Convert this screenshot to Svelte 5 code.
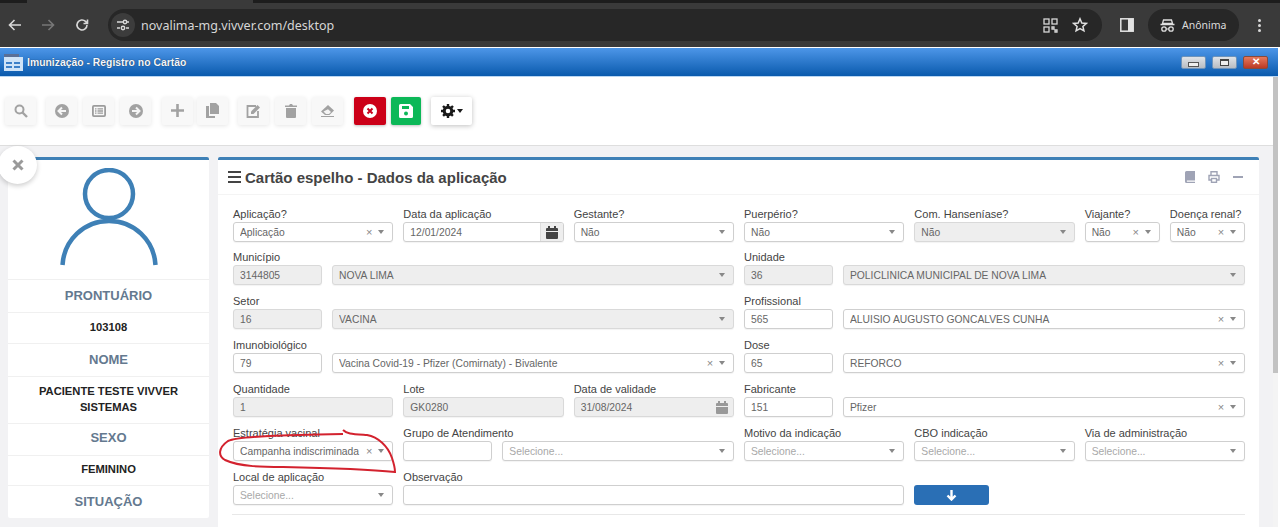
<script>
	const rowOne = [
		{ label: 'Aplicação?', value: 'Aplicação', clear: true, span: 2 },
		{ label: 'Data da aplicação', value: '12/01/2024', date: true, span: 2 },
		{ label: 'Gestante?', value: 'Não', span: 2 },
		{ label: 'Puerpério?', value: 'Não', span: 2 },
		{ label: 'Com. Hanseníase?', value: 'Não', off: true, span: 2 },
		{ label: 'Viajante?', value: 'Não', clear: true, span: 1 },
		{ label: 'Doença renal?', value: 'Não', clear: true, span: 1 }
	];
	const pairs = [
		{ label: 'Município', code: '3144805', value: 'NOVA LIMA', off: true },
		{ label: 'Unidade', code: '36', value: 'POLICLINICA MUNICIPAL DE NOVA LIMA', off: true },
		{ label: 'Setor', code: '16', value: 'VACINA', off: true },
		{ label: 'Profissional', code: '565', value: 'ALUISIO AUGUSTO GONCALVES CUNHA', clear: true },
		{ label: 'Imunobiológico', code: '79', value: 'Vacina Covid-19 - Pfizer (Comirnaty) - Bivalente', clear: true },
		{ label: 'Dose', code: '65', value: 'REFORCO', clear: true }
	];
	const patient = [
		{ head: 'PRONTUÁRIO', text: '103108' },
		{ head: 'NOME', text: 'PACIENTE TESTE VIVVER SISTEMAS' },
		{ head: 'SEXO', text: 'FEMININO', tight: true },
		{ head: 'SITUAÇÃO', text: '' }
	];
</script>

{#snippet select(value, clear, off, placeholder)}
	<div class="ctl" class:off>
		<span class="txt" class:ph={placeholder}>{value}</span>
		{#if clear}<span class="clr">×</span>{/if}
		<span class="caret"></span>
	</div>
{/snippet}

{#snippet date(value, off)}
	<div class="ctl" class:off>
		<span class="txt">{value}</span>
		<span class="addon">
			<svg width="12" height="13" viewBox="0 0 12 13"><path d="M0 3a1 1 0 0 1 1-1h1V0h2v2h4V0h2v2h1a1 1 0 0 1 1 1v2H0zM0 6h12v6a1 1 0 0 1-1 1H1a1 1 0 0 1-1-1z" fill="currentColor"/></svg>
		</span>
	</div>
{/snippet}

{#snippet pair(p)}
	<div class="field s6">
		<span class="lbl">{p.label}</span>
		<div class="duo">
			<div class="code"><div class="ctl" class:off={p.off}><span class="txt">{p.code}</span></div></div>
			<div class="grow">{@render select(p.value, p.clear, p.off, false)}</div>
		</div>
	</div>
{/snippet}

<div class="root">
	<div class="tabstrip"><span class="tab"></span></div>
	<header class="chrome">
		<svg class="nav" width="16" height="16" viewBox="0 0 16 16"><path d="M14 8H3M7.500 3 2.500 8l5 5" fill="none" stroke="#d8d8d8" stroke-width="1.600"/></svg>
		<svg class="nav fwd" width="16" height="16" viewBox="0 0 16 16"><path d="M2 8h11M8.500 3l5 5-5 5" fill="none" stroke="#777" stroke-width="1.600"/></svg>
		<svg class="nav rel" width="16" height="16" viewBox="0 0 16 16"><path d="M13 8a5 5 0 1 1-1.500-3.600L13.500 6.500M13.500 2.500v4h-4" fill="none" stroke="#d8d8d8" stroke-width="1.600"/></svg>
		<div class="omni">
			<span class="tune">
				<svg width="14" height="14" viewBox="0 0 14 14"><g fill="none" stroke="#d8d8d8" stroke-width="1.400"><path d="M1 4h6M1 10h3M10 10h3M11 4h2"/><circle cx="9" cy="4" r="1.700"/><circle cx="7" cy="10" r="1.700"/></g></svg>
			</span>
			<span class="url">novalima-mg.vivver.com/desktop</span>
			<svg class="qr" width="15" height="15" viewBox="0 0 15 15"><g fill="none" stroke="#d8d8d8" stroke-width="1.300"><rect x="1" y="1" width="5" height="5"/><rect x="9" y="1" width="5" height="5"/><rect x="1" y="9" width="5" height="5"/><path d="M9 9h2v2H9zM12 12h2v2h-2z"/></g></svg>
			<svg class="star" width="16" height="16" viewBox="0 0 16 16"><path d="M8 1.800 9.800 6l4.500.4-3.400 3 1 4.400L8 11.500l-3.900 2.300 1-4.400-3.400-3L6.200 6z" fill="none" stroke="#e0e0e0" stroke-width="1.500"/></svg>
		</div>
		<svg class="panel" width="14" height="14" viewBox="0 0 14 14"><rect x=".8" y=".8" width="12.400" height="12.400" fill="none" stroke="#e4e4e4" stroke-width="1.500"/><rect x="8" y="1" width="5" height="12" fill="#e4e4e4"/></svg>
		<div class="incog">
			<svg width="15" height="13" viewBox="0 0 15 13"><path d="M3.500 1h8l1 3.500h-10zM0.500 5.500h14" fill="none" stroke="#e0e0e0" stroke-width="1.300"/><circle cx="4" cy="10" r="2.200" fill="none" stroke="#e0e0e0" stroke-width="1.300"/><circle cx="11" cy="10" r="2.200" fill="none" stroke="#e0e0e0" stroke-width="1.300"/><path d="M6 10h3" stroke="#e0e0e0"/></svg>
			<span>Anônima</span>
		</div>
		<span class="dots"><i></i><i></i><i></i></span>
	</header>

	<div class="titlebar">
		<svg class="winicon" width="19" height="17" viewBox="0 0 19 17"><rect y="0" width="15" height="3" fill="#5a6f96"/><rect y="3" width="19" height="14" fill="#cfe3f7"/><rect x="2" y="8" width="6" height="2" fill="#3d80c8"/><rect x="10" y="8" width="6" height="2" fill="#3d80c8"/><rect x="2" y="12" width="6" height="2" fill="#3d80c8"/><rect x="10" y="12" width="6" height="2" fill="#3d80c8"/></svg>
		<span class="wintitle">Imunização - Registro no Cartão</span>
		<div class="winbtns">
			<span class="wb"><i class="wmin"></i></span>
			<span class="wb"><i class="wmax"></i></span>
			<span class="wb close">✕</span>
		</div>
	</div>

	<div class="page">
		<div class="scroller">
			<div class="toolbar">
				<button class="tb">
					<svg width="14" height="14" viewBox="0 0 14 14"><circle cx="5.500" cy="5.500" r="4" fill="none" stroke="#a2a2a2" stroke-width="2"/><path d="m8.500 8.500 4.500 4.500" stroke="#a2a2a2" stroke-width="2.400"/></svg>
				</button>
				<div class="grp g2">
					<button class="tb">
						<svg width="14" height="14" viewBox="0 0 14 14"><circle cx="7" cy="7" r="7" fill="#a2a2a2"/><path d="M11 7H4M7 3.500 3.500 7 7 10.500" fill="none" stroke="#f5f5f5" stroke-width="2"/></svg>
					</button>
					<button class="tb">
						<svg width="14" height="12" viewBox="0 0 14 12"><rect x=".9" y=".9" width="12.200" height="10.200" rx="1" fill="none" stroke="#9c9c9c" stroke-width="1.800"/><path d="M3 3.800h1.500M5.500 3.800H11M3 6h1.500M5.500 6H11M3 8.200h1.500M5.500 8.200H11" stroke="#9c9c9c" stroke-width="1.300"/></svg>
					</button>
					<button class="tb">
						<svg width="14" height="14" viewBox="0 0 14 14"><circle cx="7" cy="7" r="7" fill="#a2a2a2"/><path d="M3 7h7M7 3.500 10.500 7 7 10.500" fill="none" stroke="#f5f5f5" stroke-width="2"/></svg>
					</button>
				</div>
				<div class="grp g3">
					<button class="tb">
						<svg width="13" height="13" viewBox="0 0 13 13"><path d="M6.500 0v13M0 6.500h13" stroke="#a2a2a2" stroke-width="2.600"/></svg>
					</button>
					<button class="tb">
						<svg width="13" height="15" viewBox="0 0 13 15"><path d="M4 0h6l3 3v8H4z" fill="#a2a2a2"/><path d="M0 3h3v10h6v2H0z" fill="#a2a2a2"/></svg>
					</button>
				</div>
				<div class="grp g4">
					<button class="tb">
						<svg width="15" height="14" viewBox="0 0 15 14"><path d="M10 2H1.500v11h10.500V7" fill="none" stroke="#a2a2a2" stroke-width="1.800"/><path d="M5 7.500 11.500 1 14 3.500 7.500 10H5z" fill="#a2a2a2"/></svg>
					</button>
					<button class="tb">
						<svg width="12" height="14" viewBox="0 0 12 14"><path d="M0 1.500h4L5 0h2l1 1.500h4V3H0zM1 4h10v9a1 1 0 0 1-1 1H2a1 1 0 0 1-1-1z" fill="#a2a2a2"/></svg>
					</button>
					<button class="tb">
						<svg width="15" height="12" viewBox="0 0 15 12"><path d="M8 0 14 5.500 9.500 10H5L1 6.500z" fill="#a2a2a2"/><path d="M3.500 6.500 6 9h3l2-2-3-2.800z" fill="#f5f5f5"/><path d="M1 11.500h13" stroke="#a2a2a2"/></svg>
					</button>
				</div>
				<button class="tb solid red g5">
					<svg width="14" height="14" viewBox="0 0 14 14"><circle cx="7" cy="7" r="7" fill="#fff"/><path d="m4.500 4.500 5 5m0-5-5 5" stroke="#c9001c" stroke-width="2"/></svg>
				</button>
				<button class="tb solid green g6">
					<svg width="14" height="14" viewBox="0 0 14 14"><path d="M1.500 0H11l3 3v9.500a1.500 1.500 0 0 1-1.500 1.500h-11A1.500 1.500 0 0 1 0 12.500v-11A1.500 1.500 0 0 1 1.500 0z" fill="#fff"/><rect x="3" y="2" width="7" height="3" fill="#0cb858"/><circle cx="7" cy="9.500" r="2" fill="#0cb858"/></svg>
				</button>
				<button class="tb gear g7">
					<svg width="14" height="14" viewBox="0 0 14 14"><circle cx="7" cy="7" r="3.800" fill="none" stroke="#1a1a1a" stroke-width="3"/><path d="M7 0v14M0 7h14M2 2l10 10M12 2 2 12" stroke="#1a1a1a" stroke-width="2.400" stroke-dasharray="2.400 9.200"/></svg>
					<span class="gcaret"></span>
				</button>
			</div>

			<div class="content">
				<aside class="side">
					<div class="avatar">
						<svg width="104" height="104" viewBox="0 0 104 104"><g fill="none" stroke="#3e80b6" stroke-width="4.500"><circle cx="52" cy="26" r="24"/><path d="M5.500 97C7 72 27 53 52 53s45 19 46.500 44"/></g></svg>
					</div>
					{#each patient as p}
						<div class="lab" class:tight={p.tight}>{p.head}</div>
						{#if p.text}<div class="val" class:tight={p.tight}>{p.text}</div>{/if}
					{/each}
				</aside>

				<main class="card">
					<div class="card-head">
						<span class="burger"><i></i><i></i><i></i></span>
						<h2>Cartão espelho - Dados da aplicação</h2>
						<div class="tools">
							<svg width="10" height="12" viewBox="0 0 10 12"><path d="M1.500 0H10v9.500H2a1 1 0 0 0 0 1.200h8V12H1.500A1.500 1.500 0 0 1 0 10.500v-9A1.500 1.500 0 0 1 1.500 0z" fill="#9fa3b5"/></svg>
							<svg width="12" height="12" viewBox="0 0 12 12"><path d="M3 4V.8h6V4M3 9H1V4.500h10V9H9" fill="none" stroke="#9fa3b5" stroke-width="1.400"/><rect x="3.500" y="7.500" width="5" height="3.800" fill="none" stroke="#9fa3b5" stroke-width="1.400"/></svg>
							<svg width="10" height="12" viewBox="0 0 10 12"><path d="M0 6h10" stroke="#9fa3b5" stroke-width="2"/></svg>
						</div>
					</div>

					<div class="form">
						{#each rowOne as f}
							<div class="field first" class:s2={f.span === 2}>
								<span class="lbl">{f.label}</span>
								{#if f.date}
									{@render date(f.value, false)}
								{:else}
									{@render select(f.value, f.clear, f.off, false)}
								{/if}
							</div>
						{/each}

						{@render pair(pairs[0])}
						{@render pair(pairs[1])}
						{@render pair(pairs[2])}
						{@render pair(pairs[3])}
						{@render pair(pairs[4])}
						{@render pair(pairs[5])}

						<div class="field s2">
							<span class="lbl">Quantidade</span>
							<div class="ctl off"><span class="txt">1</span></div>
						</div>
						<div class="field s2">
							<span class="lbl">Lote</span>
							<div class="ctl off"><span class="txt">GK0280</span></div>
						</div>
						<div class="field s2">
							<span class="lbl">Data de validade</span>
							{@render date('31/08/2024', true)}
						</div>
						{@render pair({ label: 'Fabricante', code: '151', value: 'Pfizer', clear: true })}

						<div class="field s2">
							<span class="lbl">Estratégia vacinal</span>
							{@render select('Campanha indiscriminada', true, false, false)}
						</div>
						<div class="field s4">
							<span class="lbl">Grupo de Atendimento</span>
							<div class="duo">
								<div class="code"><div class="ctl"><span class="txt"></span></div></div>
								<div class="grow">{@render select('Selecione...', false, false, true)}</div>
							</div>
						</div>
						<div class="field s2">
							<span class="lbl">Motivo da indicação</span>
							{@render select('Selecione...', false, false, true)}
						</div>
						<div class="field s2">
							<span class="lbl">CBO indicação</span>
							{@render select('Selecione...', false, false, true)}
						</div>
						<div class="field s2">
							<span class="lbl">Via de administração</span>
							{@render select('Selecione...', false, false, true)}
						</div>

						<div class="field s2">
							<span class="lbl">Local de aplicação</span>
							{@render select('Selecione...', false, false, true)}
						</div>
						<div class="field s6">
							<span class="lbl">Observação</span>
							<div class="ctl"><span class="txt"></span></div>
						</div>
						<div class="field s1 btn-wrap">
							<button class="go" aria-label="Adicionar">
								<svg width="11" height="11" viewBox="0 0 11 11"><path d="M5.500 0v9M1.500 5.500l4 4 4-4" fill="none" stroke="#fff" stroke-width="2.400"/></svg>
							</button>
						</div>
					</div>
					<div class="sep"></div>
				</main>
			</div>
		</div>
		<div class="sb"><div class="thumb"></div></div>
	</div>

	<button class="closer" aria-label="Fechar">
		<svg width="12" height="12" viewBox="0 0 12 12"><path d="m1.500 1.500 9 9m0-9-9 9" stroke="#9a9a9a" stroke-width="3"/></svg>
	</button>

	<svg class="ink" width="190" height="55" viewBox="215 425 190 55">
		<path d="M343 430C347 434 352 434 367 435C378 437 388 446 392 458C394 464 395 468 395 472C375 470 330 468 283 467C265 467 240 467 225 460C218 456 218 448 228 441C238 436 290 435 343 434" fill="none" stroke="#d3222e" stroke-width="2"/>
	</svg>
</div>

<style>
	:global(body) {
		margin: 0;
		background: #fff;
		overflow: hidden;
	}
	.root {
		position: relative;
		width: 1280px;
		height: 527px;
		overflow: hidden;
		font-family: 'Liberation Sans', Arial, sans-serif;
		background: #fff;
	}
	button {
		font: inherit;
		padding: 0;
		border: 0;
	}

	/* browser frame */
	.tabstrip {
		height: 3px;
		background: #1d1d1d;
		padding-left: 27px;
	}
	.tab {
		display: block;
		width: 226px;
		height: 3px;
		background: #3a3a3a;
	}
	.chrome {
		display: flex;
		align-items: center;
		height: 44px;
		background: #3a3a3a;
	}
	.nav {
		margin-left: 7px;
		flex: none;
	}
	.fwd { margin-left: 17px; }
	.rel { margin-left: 18px; }
	.omni {
		display: flex;
		align-items: center;
		width: 994px;
		height: 32px;
		margin-left: 18px;
		border-radius: 16px;
		background: #272727;
	}
	.tune {
		display: flex;
		align-items: center;
		justify-content: center;
		width: 24px;
		height: 24px;
		margin-left: 3px;
		border-radius: 50%;
		background: #3c3c3c;
	}
	.url {
		margin-left: 6px;
		font-family: 'Noto Sans', sans-serif;
		font-size: 12.500px;
		color: #d6d6d6;
	}
	.qr { margin-left: auto; }
	.star {
		margin: 0 14px 0 14px;
	}
	.panel {
		margin-left: 18px;
	}
	.incog {
		display: flex;
		align-items: center;
		gap: 7px;
		width: 91px;
		height: 32px;
		margin-left: 14px;
		padding-left: 12px;
		box-sizing: border-box;
		border-radius: 16px;
		background: #272727;
		font-family: 'Noto Sans', sans-serif;
		font-size: 10.500px;
		color: #dcdcdc;
	}
	.dots {
		display: flex;
		flex-direction: column;
		gap: 2px;
		margin-left: 19px;
	}
	.dots i {
		width: 3px;
		height: 3px;
		border-radius: 50%;
		background: #d8d8d8;
	}

	/* window title */
	.titlebar {
		display: flex;
		align-items: center;
		width: 1278px;
		height: 28px;
		border-top: 1px solid #fff;
		border-bottom: 1px solid #b9d6f3;
		box-sizing: content-box;
		background: linear-gradient(#4d96e8, #0a5aad);
	}
	.winicon { margin-left: 4px; }
	.wintitle {
		margin-left: 4px;
		font-size: 10.400px;
		font-weight: 700;
		color: #f2f7ff;
		text-shadow: 0 0 1px #123;
	}
	.winbtns {
		display: flex;
		gap: 6px;
		margin-left: auto;
		margin-right: 10px;
	}
	.wb {
		display: flex;
		align-items: center;
		justify-content: center;
		width: 25px;
		height: 13px;
		border: 1px solid #6d93bb;
		box-sizing: border-box;
		border-radius: 2px;
		background: linear-gradient(#dfe3e8, #b8bcc2);
	}
	.wmin {
		width: 9px;
		height: 3px;
		margin-top: 4px;
		border: 1px solid #555;
		background: #eee;
	}
	.wmax {
		width: 9px;
		height: 7px;
		border: 1px solid #444;
		border-top-width: 2px;
		box-sizing: border-box;
		background: #eee;
	}
	.close {
		border-color: #8a4a3a;
		background: linear-gradient(#e6795c, #bb3a25);
		color: #fff;
		font-size: 10px;
		font-weight: 700;
		line-height: 1;
	}

	/* app */
	.page {
		display: flex;
		width: 1278px;
	}
	.scroller {
		flex: 1;
		min-width: 0;
	}
	.sb {
		width: 5px;
		height: 451px;
		background: #f4f4f4;
	}
	.thumb {
		height: 296px;
		background: #c2c2c2;
	}
	.toolbar {
		display: flex;
		align-items: center;
		height: 69px;
		padding: 0 0 1px 5px;
		box-sizing: border-box;
		border-bottom: 1px solid #dedede;
	}
	.grp {
		display: flex;
		gap: 6px;
	}
	.tb {
		display: flex;
		align-items: center;
		justify-content: center;
		width: 31px;
		height: 28px;
		border-radius: 2px;
		background: #f8f8f8;
		box-shadow: 0 1px 4px rgba(0, 0, 0, 0.1);
	}
	.g2 { margin-left: 10px; }
	.g3 { margin-left: 11px; gap: 4px; }
	.g4 { margin-left: 10px; }
	.solid { box-shadow: 0 1px 3px rgba(0, 0, 0, 0.25); }
	.red {
		width: 32px;
		background: #cc0018;
	}
	.green {
		width: 30px;
		background: #0cb858;
	}
	.g5 { margin-left: 11px; }
	.g6 { margin-left: 5px; }
	.g7 { margin-left: 10px; }
	.gear {
		width: 41px;
		gap: 2px;
		background: #fff;
		box-shadow: 0 1px 5px rgba(0, 0, 0, 0.25);
	}
	.gcaret {
		border: 3.500px solid transparent;
		border-top: 4px solid #1a1a1a;
		border-bottom: 0;
	}
	.content {
		display: flex;
		align-items: flex-start;
		gap: 9px;
		height: 382px;
		padding: 11px 14px 0 8px;
		box-sizing: border-box;
		background: #f2f2f4;
		overflow: hidden;
	}

	/* patient column */
	.side {
		flex: none;
		width: 201px;
		border-top: 3px solid #3e80b6;
		border-radius: 2px;
		background: #fff;
		text-align: center;
	}
	.avatar {
		display: flex;
		justify-content: center;
		height: 119px;
		padding-top: 8px;
		box-sizing: border-box;
	}
	.lab {
		padding: 8px 4px;
		border-top: 1px solid #f0f0f0;
		font-size: 13px;
		line-height: 16px;
		font-weight: 700;
		color: #64798f;
	}
	.lab.tight {
		padding: 6px 4px 9px;
	}
	.val {
		padding: 6px 20px 8px;
		border-top: 1px solid #f0f0f0;
		font-size: 11.200px;
		line-height: 16px;
		font-weight: 700;
		color: #222;
	}
	.val.tight {
		padding: 5px 20px 8px;
	}

	/* form card */
	.card {
		flex: none;
		width: 1041px;
		height: 400px;
		border-top: 3px solid #3e80b6;
		border-radius: 2px;
		background: #fff;
	}
	.card-head {
		display: flex;
		align-items: center;
		height: 34px;
		padding: 0 16px 0 10px;
		border-bottom: 1px solid #f4f4f4;
	}
	.burger {
		display: flex;
		flex-direction: column;
		gap: 3px;
		width: 13px;
		margin-right: 4px;
	}
	.burger i {
		height: 2px;
		background: #444;
	}
	h2 {
		margin: 0;
		font-size: 15px;
		font-weight: 700;
		color: #444;
	}
	.tools {
		display: flex;
		align-items: center;
		gap: 13px;
		margin-left: auto;
	}
	.form {
		display: grid;
		grid-template-columns: repeat(12, 1fr);
		column-gap: 10px;
		row-gap: 10px;
		width: 1012px;
		padding: 13px 0 0 15px;
	}
	.field {
		min-width: 0;
	}
	.first { margin-bottom: -1px; }
	.s1 { grid-column: span 1; }
	.s2 { grid-column: span 2; }
	.s4 { grid-column: span 4; }
	.s6 { grid-column: span 6; }
	.lbl {
		display: block;
		height: 14px;
		font-size: 11px;
		line-height: 13px;
		color: #444;
		white-space: nowrap;
	}
	.duo {
		display: flex;
		gap: 10px;
	}
	.code {
		flex: none;
		width: 89px;
	}
	.grow {
		flex: 1;
		min-width: 0;
	}
	.ctl {
		display: flex;
		align-items: center;
		height: 20px;
		padding-left: 6px;
		box-sizing: border-box;
		border: 1px solid #cfcfcf;
		border-radius: 3px;
		background: #fff;
		box-shadow: 0 1px 1px rgba(0, 0, 0, 0.05);
	}
	.ctl.off {
		background: #eee;
		border-color: #d9d9d9;
	}
	.txt {
		flex: 1;
		min-width: 0;
		font-size: 10.300px;
		color: #666;
		white-space: nowrap;
		overflow: hidden;
	}
	.ph { color: #a8a8a8; }
	.clr {
		width: 10px;
		font-size: 11px;
		line-height: 1;
		color: #888;
		text-align: center;
	}
	.caret {
		width: 0;
		margin: 0 8px 0 4px;
		border: 3.500px solid transparent;
		border-top: 4px solid #888;
		border-bottom: 0;
	}
	.addon {
		display: flex;
		align-items: center;
		justify-content: center;
		align-self: stretch;
		width: 22px;
		background: #eee;
		border-left: 1px solid #ddd;
		border-radius: 0 2px 2px 0;
		color: #444;
	}
	.off .addon {
		border-left: 0;
		color: #999;
	}
	.btn-wrap {
		padding-top: 14px;
	}
	.go {
		display: flex;
		align-items: center;
		justify-content: center;
		width: 100%;
		height: 20px;
		border-radius: 3px;
		background: #2a6fb5;
	}
	.sep {
		width: 1013px;
		height: 1px;
		margin: 9px 0 0 14px;
		background: #e8e8e8;
	}

	/* overlays */
	.closer {
		position: absolute;
		left: -2px;
		top: 146px;
		display: flex;
		align-items: center;
		justify-content: center;
		width: 39px;
		height: 38px;
		border-radius: 50%;
		background: #fff;
		box-shadow: 0 2px 5px rgba(0, 0, 0, 0.2);
	}
	.ink {
		position: absolute;
		left: 215px;
		top: 425px;
		pointer-events: none;
	}
</style>
